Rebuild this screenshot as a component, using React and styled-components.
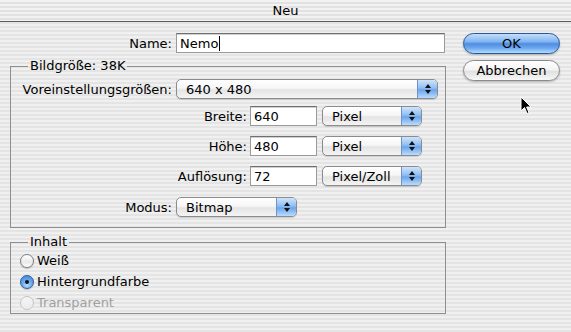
import React from 'react'
import styled, { createGlobalStyle } from 'styled-components'

const GlobalStyle = createGlobalStyle`
  html, body {
    margin: 0;
    padding: 0;
  }
  body {
    font-family: "DejaVu Sans", "Liberation Sans", sans-serif;
    font-size: 13px;
    color: #000;
  }
`

const pinstripe = `repeating-linear-gradient(
  to bottom,
  #f0f0f0 0px, #f0f0f0 2px,
  #e4e4e4 2px, #e4e4e4 4px
)`

const Window = styled.div`
  position: relative;
  width: 571px;
  height: 332px;
  overflow: hidden;
  background: ${pinstripe};
`

const TitleBar = styled.div`
  height: 21px;
  border-bottom: 1px solid #5e5e5e;
  display: flex;
  align-items: center;
  justify-content: center;
  font-size: 13px;
  background: repeating-linear-gradient(
    to bottom,
    #f2f2f2 0px, #f2f2f2 2px,
    #e2e2e2 2px, #e2e2e2 4px
  );
`

const Body = styled.div`
  display: flex;
`

const LeftColumn = styled.div`
  width: 436px;
  padding-left: 10px;
  display: flex;
  flex-direction: column;
`

const RightColumn = styled.div`
  padding-left: 17px;
  padding-top: 11px;
  display: flex;
  flex-direction: column;
  gap: 6px;
`

const Row = styled.div`
  display: flex;
  align-items: center;
  height: 20px;
  margin-top: ${p => p.$top || 0}px;
`

const Label = styled.div`
  width: ${p => p.$width}px;
  margin-right: ${p => p.$gap || 4}px;
  text-align: right;
  white-space: nowrap;
`

const TextField = styled.div`
  box-sizing: border-box;
  width: ${p => p.$width}px;
  height: 20px;
  background: #fff;
  border: 1px solid #9a9a9a;
  border-top-color: #6f6f6f;
  box-shadow: inset 0 1px 0 #d0d0d0;
  padding-left: 3px;
  display: flex;
  align-items: center;
  line-height: 1;
`

const Caret = styled.span`
  display: inline-block;
  width: 1px;
  height: 15px;
  background: #000;
  margin-left: 1px;
`

const Popup = styled.div`
  box-sizing: border-box;
  width: ${p => p.$width}px;
  height: 20px;
  margin-left: ${p => p.$left || 0}px;
  border: 1px solid #8c8c8c;
  border-radius: 5px;
  background: linear-gradient(to bottom, #ffffff 0%, #f6f6f6 45%, #e4e4e4 55%, #f4f4f4 100%);
  box-shadow: 0 1px 1px rgba(0, 0, 0, 0.15);
  display: flex;
  align-items: center;
  justify-content: space-between;
  padding-left: 9px;
  overflow: hidden;
`

const Stepper = styled.div`
  width: 19px;
  height: 100%;
  border-left: 1px solid #6f93c6;
  background: linear-gradient(to bottom, #cfe4fb 0%, #8fbdf2 45%, #6aa5ec 55%, #b9dcfd 100%);
  display: flex;
  flex-direction: column;
  align-items: center;
  justify-content: center;
  gap: 2px;
`

const Arrow = styled.div`
  width: 0;
  height: 0;
  border-left: 3px solid transparent;
  border-right: 3px solid transparent;
  ${p => (p.$down ? 'border-top: 4px solid #111;' : 'border-bottom: 4px solid #111;')}
`

const Group = styled.fieldset`
  box-sizing: border-box;
  width: 436px;
  margin: ${p => p.$top}px 0 0 0;
  padding: 0 0 ${p => p.$bottom}px 0;
  border: 1px solid #8e8e8e;
  min-width: 0;
`

const Legend = styled.legend`
  margin-left: 17px;
  padding: 0 2px;
  line-height: 14px;
`

const RadioRow = styled.div`
  display: flex;
  align-items: center;
  height: 21px;
  padding-left: 9px;
  margin-top: ${p => p.$top || 0}px;
  color: ${p => (p.$disabled ? '#a0a0a0' : '#000')};
`

const RadioCircle = styled.div`
  box-sizing: border-box;
  width: 14px;
  height: 14px;
  border-radius: 50%;
  margin-right: 3px;
  display: flex;
  align-items: center;
  justify-content: center;
  border: 1px solid ${p => (p.$checked ? '#2f5d9c' : p.$disabled ? '#c4c4c4' : '#7d7d7d')};
  background: ${p =>
    p.$checked
      ? 'radial-gradient(circle at 50% 75%, #b8e0ff 0%, #6aa8ee 45%, #3f7fd8 100%)'
      : p.$disabled
      ? 'linear-gradient(to bottom, #f4f4f4, #ececec)'
      : 'linear-gradient(to bottom, #ffffff 0%, #e9e9e9 60%, #ffffff 100%)'};
  box-shadow: ${p => (p.$disabled ? 'none' : '0 1px 1px rgba(0,0,0,0.2)')};
`

const Dot = styled.div`
  width: 4px;
  height: 4px;
  border-radius: 50%;
  background: #111;
`

const PillButton = styled.div`
  box-sizing: border-box;
  width: 97px;
  height: 21px;
  border-radius: 11px;
  display: flex;
  align-items: center;
  justify-content: center;
  font-size: 13px;
  border: 1px solid ${p => (p.$primary ? '#28579b' : '#8a8a8a')};
  background: ${p =>
    p.$primary
      ? 'linear-gradient(to bottom, #c3defb 0%, #83b5f1 40%, #4f8ce2 52%, #6fa9ef 75%, #b2dcfd 100%)'
      : 'linear-gradient(to bottom, #ffffff 0%, #f4f4f4 45%, #e1e1e1 55%, #f7f7f7 100%)'};
  box-shadow: 0 1px 2px rgba(0, 0, 0, 0.25);
`

const Cursor = styled.svg`
  position: absolute;
  left: 520px;
  top: 96px;
`

const PopupField = ({ width, left, value }) => (
  <Popup $width={width} $left={left}>
    <span>{value}</span>
    <Stepper>
      <Arrow />
      <Arrow $down />
    </Stepper>
  </Popup>
)

const Radio = ({ checked, disabled, label, top }) => (
  <RadioRow $disabled={disabled} $top={top}>
    <RadioCircle $checked={checked} $disabled={disabled}>
      {checked && <Dot />}
    </RadioCircle>
    {label}
  </RadioRow>
)

const App = () => {
  return (
    <Window>
      <GlobalStyle />
      <TitleBar>Neu</TitleBar>
      <Body>
        <LeftColumn>
          <Row $top={11}>
            <Label $width={162}>Name:</Label>
            <TextField $width={269}>
              Nemo
              <Caret />
            </TextField>
          </Row>

          <Group $top={6} $bottom={10}>
            <Legend>Bildgröße: 38K</Legend>
            <Row $top={6}>
              <Label $width={161}>Voreinstellungsgrößen:</Label>
              <PopupField width={262} value="640 x 480" />
            </Row>
            <Row $top={7}>
              <Label $width={236} $gap={3}>Breite:</Label>
              <TextField $width={67}>640</TextField>
              <PopupField width={100} left={5} value="Pixel" />
            </Row>
            <Row $top={10}>
              <Label $width={236} $gap={3}>Höhe:</Label>
              <TextField $width={67}>480</TextField>
              <PopupField width={100} left={5} value="Pixel" />
            </Row>
            <Row $top={10}>
              <Label $width={236} $gap={3}>Auflösung:</Label>
              <TextField $width={67}>72</TextField>
              <PopupField width={100} left={5} value="Pixel/Zoll" />
            </Row>
            <Row $top={11}>
              <Label $width={161}>Modus:</Label>
              <PopupField width={121} value="Bitmap" />
            </Row>
          </Group>

          <Group $top={7} $bottom={0}>
            <Legend>Inhalt</Legend>
            <Radio label="Weiß" top={1} />
            <Radio label="Hintergrundfarbe" checked />
            <Radio label="Transparent" disabled />
          </Group>
        </LeftColumn>

        <RightColumn>
          <PillButton $primary>OK</PillButton>
          <PillButton>Abbrechen</PillButton>
        </RightColumn>
      </Body>

      <Cursor width="12" height="19" viewBox="0 0 12 19">
        <path d="M1 1 L1 15 L4.5 11.5 L7 17.5 L9 16.6 L6.6 11 L11 11 Z" fill="#000" stroke="#fff" strokeWidth="1" />
      </Cursor>
    </Window>
  )
}

export default App
